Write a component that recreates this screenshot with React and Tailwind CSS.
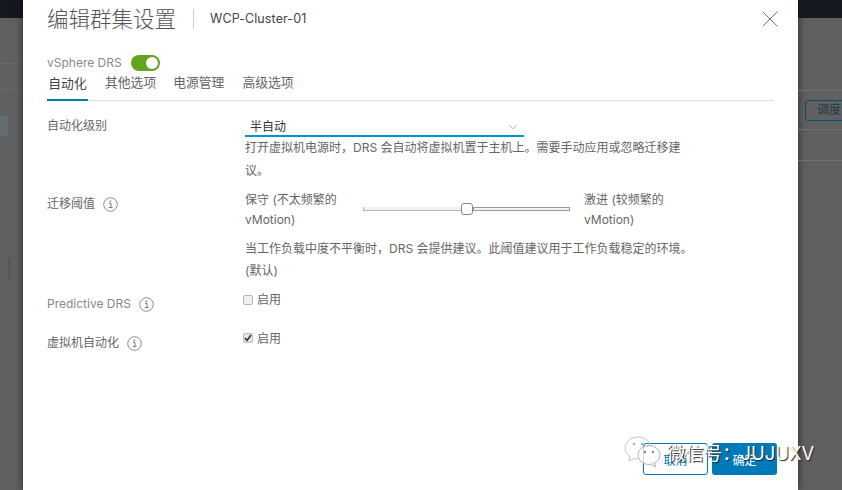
import { ChevronDown, X } from 'lucide-react';

const FONT = { fontFamily: 'Inter, "Noto Sans CJK SC", sans-serif' };

function InfoIcon() {
  return (
    <svg width="15" height="15" viewBox="0 0 15 15" fill="none" className="shrink-0">
      <circle cx="7.5" cy="7.5" r="6.8" stroke="#8c8c8c" strokeWidth="1" />
      <path d="M6 6.500h2v4M5.600 10.600h4" stroke="#777" strokeWidth="1" />
      <circle cx="7.400" cy="4.300" r="0.900" fill="#777" />
    </svg>
  );
}

function Check({ checked }) {
  return (
    <span className={`flex h-[10px] w-[10px] items-center justify-center rounded-[2px] border ${checked ? 'border-[#bbb] bg-[#e4e4e4]' : 'border-[#b5b5b5] bg-[#efefef]'}`}>
      {checked && (
        <svg width="8" height="8" viewBox="0 0 8 8" fill="none">
          <path d="M1 4l2 2.400L7 1" stroke="#333" strokeWidth="1.600" />
        </svg>
      )}
    </span>
  );
}

function WeChatMark() {
  return (
    <svg width="38" height="32" viewBox="0 0 38 32" fill="none">
      <path d="M14 1C7 1 1 6 1 12c0 3.500 2 6.500 5 8.500L5 25l5-2.600c1.300.4 2.600.6 4 .6" fill="#ffffff" fillOpacity="0.7" stroke="#c4c4c4" strokeWidth="1" />
      <path d="M14 1c6.500 0 12 4 13 9.500" stroke="#c4c4c4" strokeWidth="1" />
      <ellipse cx="25" cy="19" rx="11" ry="9.500" fill="#ffffff" fillOpacity="0.75" stroke="#b0b0b0" strokeWidth="1" />
      <path d="M30 27l2 4-5-2.400" fill="#ffffff" stroke="#b0b0b0" strokeWidth="1" />
      <circle cx="10" cy="8" r="1.200" fill="#aaa" />
      <circle cx="18" cy="8" r="1.200" fill="#aaa" />
      <circle cx="21" cy="16" r="1.200" fill="#888" />
      <circle cx="29" cy="16" r="1.200" fill="#888" />
    </svg>
  );
}

export default function App() {
  return (
    <div style={FONT} className="relative flex h-[490px] w-[842px] overflow-hidden bg-[#606060]">
      {/* backdrop left */}
      <div className="flex w-[23px] shrink-0 flex-col">
        <div className="h-[18px] bg-[#14191f]" />
        <div className="h-[46px] border-b border-[#686868]" />
        <div className="h-[26px] border-b border-[#686868]" />
        <div className="mt-[26px] h-[20px] w-[8px] bg-[#666d70]" />
        <div className="ml-[8px] mt-[122px] h-[22px] w-[3px] bg-[#575757]" />
      </div>

      {/* modal */}
      <div className="flex w-[775px] shrink-0 flex-col bg-white pl-[24px] pr-[24px] shadow-[0_0_8px_rgba(0,0,0,0.6)]">
        <div className="flex h-[38px] items-center">
          <h1 className="w-[146px] text-[21.5px] leading-[38px] font-light text-[#555]">编辑群集设置</h1>
          <div className="h-[20px] w-px bg-[#cfcfcf]" />
          <span className="ml-[16px] text-[12.5px] tracking-[0.1px] text-[#444]">WCP-Cluster-01</span>
          <X className="ml-auto mr-[-10px]" size={28} strokeWidth={0.8} color="#666" />
        </div>

        <div className="mt-[16px] flex h-[18px] items-center">
          <span className="w-[84px] text-[12px] text-[#8a8a8a]">vSphere DRS</span>
          <span className="flex h-[16px] w-[29px] items-center justify-end rounded-full bg-[#62a420] pr-[2px]">
            <span className="h-[12px] w-[12px] rounded-full bg-white" />
          </span>
        </div>

        {/* tabs */}
        <div className="flex h-[29px] border-b border-[#dcdcdc] text-[12.8px] text-[#666]">
          <div className="flex h-[29px] w-[41px] items-center justify-center border-b-[2px] border-[#0079b8] pb-[3px] text-[#444]">自动化</div>
          <span className="ml-[17px] leading-[22px]">其他选项</span>
          <span className="ml-[17px] leading-[22px]">电源管理</span>
          <span className="ml-[18px] leading-[22px]">高级选项</span>
        </div>

        {/* form */}
        <div className="mt-[15px] grid grid-cols-[198px_1fr] text-[12px] text-[#666]">
          <div className="pt-[1px] leading-[18px]">自动化级别</div>
          <div>
            <div className="flex h-[21px] w-[279px] items-center justify-between border-b-[2px] border-[#0094d2] pl-[5px] pr-[4px] pt-[3px] text-[#333]">
              半自动
              <ChevronDown size={14} strokeWidth={1} color="#777" />
            </div>
            <p className="mt-[-1px] leading-[23px]">
              打开虚拟机电源时，DRS 会自动将虚拟机置于主机上。需要手动应用或忽略迁移建
              <br />
              议。
            </p>
          </div>

          <div className="mt-[12px] flex h-[20px] items-center gap-[8px]">
            迁移阈值
            <InfoIcon />
          </div>
          <div className="mt-[8px]">
            <div className="flex items-center">
              <div className="w-[118px] leading-[20px]">
                保守 (不太频繁的
                <br />
                vMotion)
              </div>
              <div className="relative mt-[-2px] flex h-[5px] w-[207px] items-center">
                <span className="h-[4px] w-[98px] border-b border-l border-[#b5b5b5] bg-[#f2f2f2]" />
                <span className="z-10 h-[12px] w-[12px] shrink-0 rounded-[3px] border border-[#888] bg-white" />
                <span className="h-[4px] flex-1 border border-[#999] bg-[#f4f4f4]" />
              </div>
              <div className="ml-[14px] leading-[20px]">
                激进 (较频繁的
                <br />
                vMotion)
              </div>
            </div>
            <p className="mt-[8px] leading-[22px]">
              当工作负载中度不平衡时，DRS 会提供建议。此阈值建议用于工作负载稳定的环境。
              <br />
              (默认)
            </p>
          </div>

          <div className="mt-[12px] flex h-[20px] items-center gap-[8px] text-[#888]">
            Predictive DRS
            <InfoIcon />
          </div>
          <div className="ml-[-2px] mt-[8px] flex h-[20px] items-center gap-[4px]">
            <Check />
            启用
          </div>

          <div className="mt-[19px] flex h-[20px] items-center gap-[8px]">
            虚拟机自动化
            <InfoIcon />
          </div>
          <div className="ml-[-2px] mt-[16px] flex h-[20px] items-start gap-[4px] leading-[18px]">
            <span className="mt-[3px]"><Check checked /></span>
            启用
          </div>
        </div>

        {/* footer */}
        <div className="mt-auto mb-[15px] mr-[-3px] flex justify-end gap-[4px] text-[12px]">
          <button className="h-[32px] w-[65px] rounded-[3px] border border-[#0079b8] bg-white pt-[3px] text-[#0079b8]">取消</button>
          <button className="h-[32px] w-[65px] rounded-[3px] bg-[#0079b8] pt-[3px] text-white">确定</button>
        </div>
      </div>

      {/* backdrop right */}
      <div className="flex min-w-0 flex-1 flex-col pl-[7px]">
        <div className="ml-[-7px] h-[18px] bg-[#14191f]" />
        <div className="ml-[-7px] h-[73px] border-b border-[#6e6e6e]" />
        <div className="ml-[-7px] flex h-[39px] items-center border-b border-[#6e6e6e] pl-[7px]">
          <span className="flex h-[21px] w-[60px] shrink-0 items-center rounded-[3px] border border-[#00507a] pl-[11px] text-[12px] text-[#1d3c4e]">调度</span>
        </div>
        <div className="ml-[-7px] h-[31px] border-b border-[#6e6e6e]" />
      </div>

      {/* watermark over the buttons */}
      <div className="absolute left-[624px] top-[436px] flex items-start">
        <WeChatMark />
        <span className="ml-[5px] mt-[4px] whitespace-nowrap text-[18.4px] leading-[26px] text-white [text-shadow:1px_1px_1px_#222]">微信号：JUJUXV</span>
      </div>
    </div>
  );
}
